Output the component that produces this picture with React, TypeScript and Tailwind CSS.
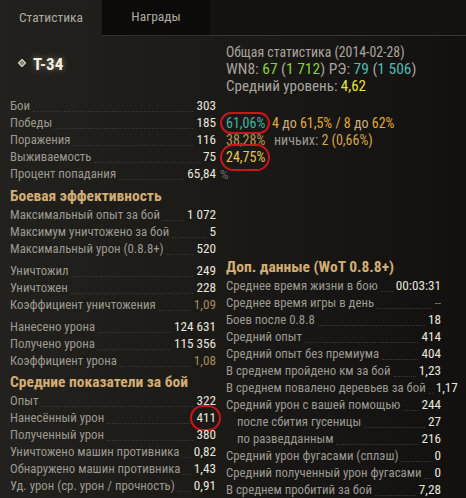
import React from "react";

const FONT = "'Roboto Condensed', 'Liberation Sans Narrow', 'Arial Narrow', 'DejaVu Sans Condensed', sans-serif";

type RowProps = {
  label: string;
  value: string;
  valueCls?: string;
  indent?: boolean;
  circle?: boolean;
};

function Circle() {
  return (
    <span className="pointer-events-none absolute -left-[6px] -right-[5px] -top-[3px] -bottom-[3px] rounded-full border-2 border-[#c8161a]" />
  );
}

function Row({ label, value, valueCls = "text-[#e8e5de]", indent, circle }: RowProps) {
  return (
    <div className="flex h-[17px] items-center">
      <span className={`whitespace-nowrap text-[12.8px] text-[#9c9991] ${indent ? "pl-[11px]" : ""}`}>{label}</span>
      <span className="mx-[3px] mb-[3px] min-w-[4px] flex-1 self-end border-b border-dotted border-[#3b3934]" />
      <span className={`relative whitespace-nowrap text-[13.2px] ${valueCls}`}>
        {value}
        {circle && <Circle />}
      </span>
    </div>
  );
}

function Heading({ children }: { children: React.ReactNode }) {
  return (
    <div className="flex h-[19px] items-center whitespace-nowrap text-[15.5px] font-bold text-[#d2ad74]">
      {children}
    </div>
  );
}

const dim = "text-[#a48a58]";

export default function App() {
  return (
    <div
      className="h-[498px] w-[466px] overflow-hidden bg-[linear-gradient(90deg,#23211d_0%,#1c1a17_45%,#121110_100%)]"
      style={{ fontFamily: FONT }}
    >
      {/* tabs */}
      <div className="flex h-[36px]">
        <div className="flex w-[102px] items-center justify-center pb-[2px] text-[13.5px] text-[#aeaaa2]">Статистика</div>
        <div className="flex w-[108px] items-center justify-center border-b border-[#33312d] bg-[#0c0b0a] pb-[2px] text-[13.5px] text-[#aeaaa2]">
          Награды
        </div>
        <div className="flex-1 border-b border-[#3a3834] bg-[#131211]" />
      </div>

      <div className="flex pl-[10px]">
        {/* left column */}
        <div className="w-[206px]">
          <div className="flex h-[61.5px] items-start gap-[8px] pl-[9px] pt-[18px]">
            <span className="mt-[6px] h-[6px] w-[6px] rotate-45 border border-[#d8d4c8] bg-[#8a8578]" />
            <span className="text-[17px] font-bold leading-[20px] text-[#f2eee2] [text-shadow:0_0_6px_rgba(255,240,200,0.45)]">Т-34</span>
          </div>
          <Row label="Бои" value="303" />
          <Row label="Победы" value="185" />
          <Row label="Поражения" value="116" />
          <Row label="Выживаемость" value="75" />
          <Row label="Процент попадания" value="65,84" />

          <div className="mt-[5px]">
            <Heading>Боевая эффективность</Heading>
          </div>
          <Row label="Максимальный опыт за бой" value="1 072" />
          <Row label="Максимум уничтожено за бой" value="5" />
          <Row label="Максимальный урон (0.8.8+)" value="520" />
          <div className="mt-[5px]">
            <Row label="Уничтожил" value="249" />
            <Row label="Уничтожен" value="228" />
            <Row label="Коэффициент уничтожения" value="1,09" valueCls={dim} />
          </div>
          <div className="mt-[5px]">
            <Row label="Нанесено урона" value="124 631" />
            <Row label="Получено урона" value="115 356" />
            <Row label="Коэффициент урона" value="1,08" valueCls={dim} />
          </div>
          <div className="mt-[4px]">
            <Heading>Средние показатели за бой</Heading>
          </div>
          <Row label="Опыт" value="322" />
          <Row label="Нанесённый урон" value="411" circle />
          <Row label="Полученный урон" value="380" />
          <Row label="Уничтожено машин противника" value="0,82" />
          <Row label="Обнаружено машин противника" value="1,43" />
          <Row label="Уд. урон (ср. урон / прочность)" value="0,91" />
        </div>

        {/* right column */}
        <div className="ml-[10px] w-[215px]">
          <div className="h-[61.5px] pt-[8px]">
            <div className="flex h-[17px] items-center whitespace-nowrap text-[13.8px] text-[#a9a59d]">Общая статистика (2014-02-28)</div>
            <div className="flex h-[17px] items-center whitespace-nowrap text-[15.5px] text-[#a9a59d]">
              WN8:&nbsp;<span className="text-[#86d23a]">67</span>&nbsp;(<span className="text-[#86d23a]">1 712</span>) РЭ:&nbsp;
              <span className="text-[#4fbcb2]">79</span>&nbsp;(<span className="text-[#4fbcb2]">1 506</span>)
            </div>
            <div className="flex h-[17px] items-center whitespace-nowrap text-[15px] text-[#a9a59d]">
              Средний уровень:&nbsp;<span className="text-[#ece23a]">4,62</span>
            </div>
          </div>
          <div className="h-[17px]" />
          <div className="flex h-[17px] items-center whitespace-nowrap text-[14px]">
            <span className="w-[46px]">
              <span className="relative text-[#3fb3a3]">
                61,06%
                <Circle />
              </span>
            </span>
            <span className="text-[#e2a93c]">
              4 <span className="text-[#c9b07e]">до</span> 61,5% / 8 <span className="text-[#c9b07e]">до</span> 62%
            </span>
          </div>
          <div className="flex h-[17px] items-center whitespace-nowrap text-[14px]">
            <span className="w-[48px] text-[#b89a5c]">38,28%</span>
            <span className="text-[#9c9991]">
              ничьих: <span className="text-[#d6a447]">2 (0,66%)</span>
            </span>
          </div>
          <div className="flex h-[17px] items-center whitespace-nowrap text-[14px]">
            <span className="relative text-[#e6c851]">
              24,75%
              <Circle />
            </span>
          </div>
          <div className="flex h-[17px] items-center text-[13.5px] text-[#6c6a66]">
            <span className="-ml-[6px]">%</span>
          </div>

          <div className="mt-[76px]">
            <Heading>Доп. данные (WoT 0.8.8+)</Heading>
          </div>
          <Row label="Среднее время жизни в бою" value="00:03:31" />
          <Row label="Среднее время игры в день" value="--" valueCls="text-[#77746e]" />
          <Row label="Боев после 0.8.8" value="18" />
          <Row label="Средний опыт" value="414" />
          <Row label="Средний опыт без премиума" value="404" />
          <Row label="В среднем пройдено км за бой" value="1,23" />
          <Row label="В среднем повалено деревьев за бой" value="1,17" />
          <Row label="Средний урон с вашей помощью" value="244" />
          <Row label="после сбития гусеницы" value="27" indent />
          <Row label="по разведданным" value="216" indent />
          <Row label="Средний урон фугасами (сплэш)" value="0" />
          <Row label="Средний полученный урон фугасами" value="0" />
          <Row label="В среднем пробитий за бой" value="7,28" />
        </div>
      </div>
    </div>
  );
}
